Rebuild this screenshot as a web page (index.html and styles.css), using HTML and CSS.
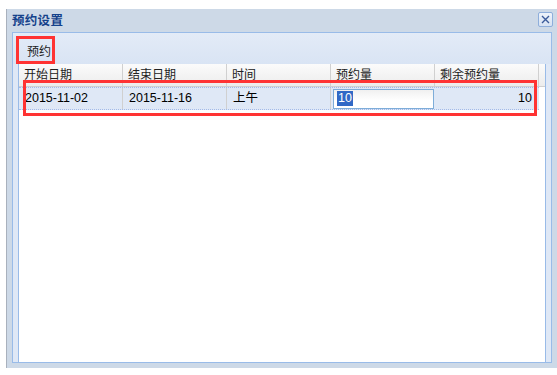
FILE: index.html
```html
<!DOCTYPE html>
<html>
<head>
<meta charset="utf-8">
<link rel="stylesheet" href="styles.css">
</head>
<body>
<div class="win">
  <div class="win-title">
    <span class="win-title-text">预约设置</span>
    <span class="win-close">
      <svg width="13" height="13" viewBox="0 0 13 13"><path d="M3 3 L10 10 M10 3 L3 10" stroke="#3a5a9a" stroke-width="1.4" fill="none"/></svg>
    </span>
  </div>
  <div class="panel">
    <div class="tbar"><span class="tbtn">预约</span></div>
    <div class="grid-wrap">
      <div class="grid">
        <div class="ghead">
          <div class="hcell">开始日期</div>
          <div class="hcell">结束日期</div>
          <div class="hcell">时间</div>
          <div class="hcell">预约量</div>
          <div class="hcell">剩余预约量</div>
          <div class="hfill"></div>
        </div>
        <div class="grow">
          <div class="cell">2015-11-02</div>
          <div class="cell">2015-11-16</div>
          <div class="cell">上午</div>
          <div class="cell cell-edit"><span class="editor"><span class="sel">10</span></span></div>
          <div class="cell cell-num">10</div>
        </div>
      </div>
    </div>
  </div>
</div>
<div class="mark mark-btn"></div>
<div class="mark mark-row"></div>
</body>
</html>
```

FILE: styles.css
```css
html, body {
  margin: 0;
  padding: 0;
  background: #ffffff;
}
body {
  position: relative;
  width: 557px;
  height: 375px;
  overflow: hidden;
  font-family: "Liberation Sans", "Noto Sans CJK SC", sans-serif;
  font-size: 12px;
  color: #000;
}
.win {
  margin: 9px 0 0 6px;
  width: 551px;
  height: 359px;
  box-sizing: border-box;
  background: #cdd9e7;
  border-left: 1px solid #a9b1bd;
  padding: 0 5px 5px 5px;
  display: flex;
  flex-direction: column;
}
.win-title {
  height: 23px;
  display: flex;
  align-items: center;
  justify-content: space-between;
  flex: none;
}
.win-title-text {
  font-weight: bold;
  font-size: 12.5px;
  color: #15428b;
  letter-spacing: 0.3px;
  margin-top: -2px;
}
.win-close {
  width: 15px;
  height: 15px;
  box-sizing: border-box;
  border: 1px solid #8eaedb;
  background: linear-gradient(#eef3fa, #d6e2f3);
  border-radius: 2px;
  display: flex;
  align-items: center;
  justify-content: center;
  margin-right: -1px;
  margin-top: -2px;
}
.win-close svg { display: block; }
.panel {
  flex: 1;
  border: 1px solid #99bbe8;
  background: #dfe8f6;
  display: flex;
  flex-direction: column;
}
.tbar {
  height: 31px;
  flex: none;
  display: flex;
  align-items: center;
  padding-left: 14px;
  background: linear-gradient(#e3ebf7, #d9e4f4);
}
.tbtn {
  color: #222;
  font-size: 12px;
  margin-top: 3px;
}
.grid-wrap {
  flex: 1;
  padding: 0 5px;
  display: flex;
}
.grid {
  flex: 1;
  background: #fff;
  border-left: 1px solid #99bbe8;
  border-right: 1px solid #99bbe8;
}
.ghead {
  display: flex;
  height: 22px;
  background: linear-gradient(#fbfbfb, #ececec);
  border-bottom: 1px solid #d0d0d0;
}
.hcell {
  width: 104px;
  box-sizing: border-box;
  border-right: 1px solid #d0d0d0;
  padding-left: 5px;
  line-height: 22px;
  color: #222;
  flex: none;
}
.hfill { flex: 1; }
.grow {
  display: flex;
  width: 520px;
  height: 21px;
  background: #dfe8f6;
  border-top: 1px dotted #a3bae9;
  border-bottom: 1px dotted #a3bae9;
}
.cell {
  width: 104px;
  box-sizing: border-box;
  border-right: 1px solid #d0d0d0;
  padding-left: 6px;
  line-height: 21px;
  font-size: 12.5px;
  flex: none;
}
.cell:last-child { border-right: none; }
.cell-num {
  text-align: right;
  padding-right: 7px;
}
.cell-edit {
  padding: 0 0 0 2px;
  border-right: none;
  display: flex;
  align-items: center;
}
.editor {
  width: 101px;
  height: 20px;
  box-sizing: border-box;
  border: 1px solid #7eadd9;
  background: linear-gradient(#f0f0f0, #ffffff 60%);
  display: flex;
  align-items: center;
  padding-left: 3px;
}
.sel {
  background: #3169c6;
  color: #fff;
  line-height: 15px;
  padding: 0 1px;
}
.mark {
  position: absolute;
  border: 3px solid #ff3333;
  box-sizing: border-box;
}
.mark-btn {
  left: 16px;
  top: 36px;
  width: 39px;
  height: 28px;
}
.mark-row {
  left: 23px;
  top: 80px;
  width: 514px;
  height: 36px;
}
```
